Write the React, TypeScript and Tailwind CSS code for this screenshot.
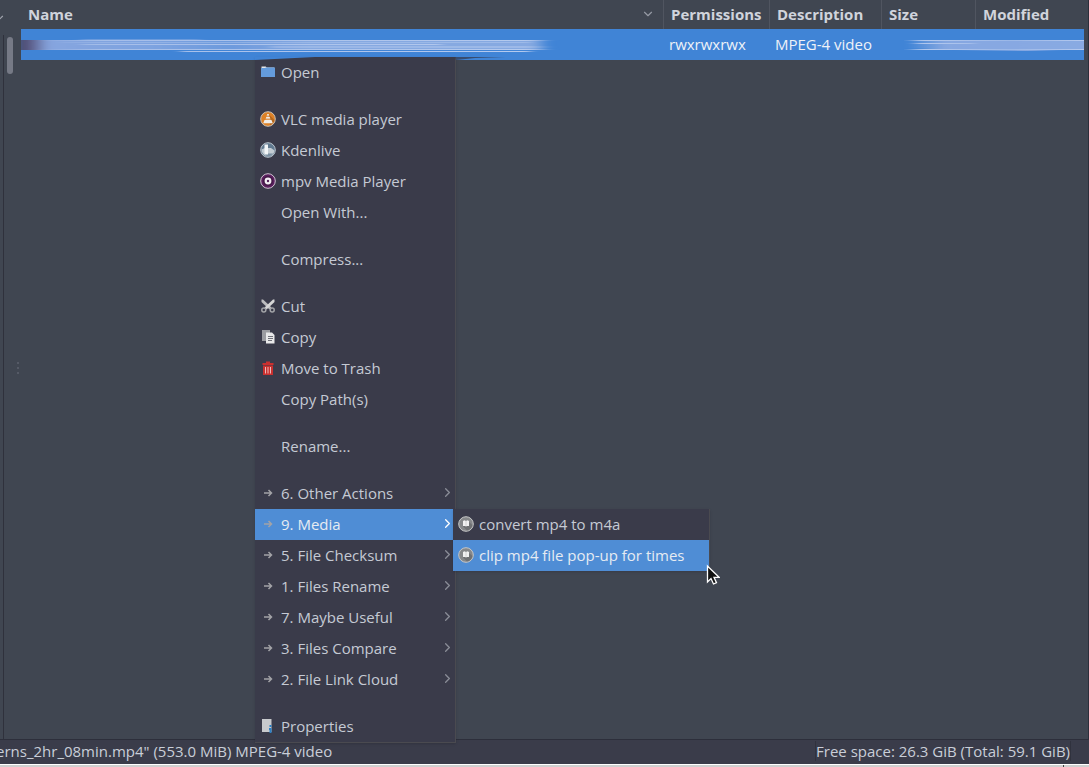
import React from 'react';
import { ChevronDown, ChevronRight } from 'lucide-react';

type Item = {
  label: string;
  icon?: React.ReactNode;
  submenu?: boolean;
  active?: boolean;
};

function FolderIcon() {
  return (
    <svg width="16" height="16" viewBox="0 0 16 16">
      <path d="M1.5 3.5V2.6h4.2l1 .9h7.5v2H1.5z" fill="#e4e6ea" />
      <path d="M1 4h4l1-.6h9V13H1z" fill="#649bdc" />
    </svg>
  );
}

function VlcIcon() {
  return (
    <svg width="16" height="16" viewBox="0 0 16 16">
      <circle cx="8" cy="8" r="7.3" fill="#dd8126" stroke="#c9c0b6" />
      <path d="M8.5 3l6 6a7 7 0 0 1-4.5 5z" fill="#b5671c" />
      <path d="M7.3 3h1.4l.6 1.8H6.7zM6.3 6h3.4l.6 1.8H5.7zM4.5 9h7l1.3 3.2H3.2z" fill="#f0ece7" />
      <path d="M6.7 4.8h2.6l.4 1.2H6.3zM5.7 7.8h4.6l.4 1.2H5.3z" fill="#de9a5b" />
    </svg>
  );
}

function KdenliveIcon() {
  return (
    <svg width="16" height="16" viewBox="0 0 16 16">
      <circle cx="8" cy="8" r="7.3" fill="#60798f" stroke="#b9c3cc" />
      <path d="M1.5 7.5L5 6h6l3.5 2.5A7 7 0 0 1 8 14.5 7 7 0 0 1 1.5 7.5z" fill="#c3ccd3" />
      <path d="M4 11.5h9A7 7 0 0 1 8 14.5a7 7 0 0 1-4-3z" fill="#7b90a2" />
      <path d="M4.5 2.5H8v10H4.5z" fill="#f3f6f8" />
    </svg>
  );
}

function MpvIcon() {
  return (
    <svg width="16" height="16" viewBox="0 0 16 16">
      <circle cx="8" cy="8" r="7.3" fill="#5a1f5e" stroke="#d0c4d2" />
      <circle cx="8" cy="8" r="5" fill="#431846" />
      <circle cx="8" cy="8" r="3.4" fill="#f3eef4" />
      <circle cx="8" cy="8" r="1.2" fill="#52205a" />
    </svg>
  );
}

function CutIcon() {
  return (
    <svg width="16" height="16" viewBox="0 0 16 16">
      <path d="M1.5 1.5V4l8 7.5 2-2L3 1.5z" fill="#bdbdbf" />
      <path d="M14.5 1.5V4l-8 7.5-2-2 8.5-8z" fill="#d6d6d6" />
      <circle cx="3.8" cy="12" r="2" fill="none" stroke="#a3a4a8" strokeWidth="1.5" />
      <circle cx="12.2" cy="12" r="2" fill="none" stroke="#a3a4a8" strokeWidth="1.5" />
    </svg>
  );
}

function CopyIcon() {
  return (
    <svg width="16" height="16" viewBox="0 0 16 16">
      <path d="M2 1h8v11H2z" fill="#9b9ca1" />
      <path d="M6 3.5h6L14.5 6v8.5H6z" fill="#e9e9ea" />
      <path d="M8 7.5h5M8 9.5h5M8 11.5h4" stroke="#6f7078" />
    </svg>
  );
}

function TrashIcon() {
  return (
    <svg width="16" height="16" viewBox="0 0 16 16">
      <path d="M6 1.5h4V3h3.5v2h-11V3H6z" fill="#c9302f" />
      <path d="M3 5.5h10V15H3z" fill="#c9302f" />
      <path d="M5.5 7v6.5M8 7v6.5M10.5 7v6.5" stroke="#efb9b8" />
    </svg>
  );
}

function PropertiesIcon() {
  return (
    <svg width="16" height="16" viewBox="0 0 16 16">
      <path d="M2 1h9.5v13H2z" fill="#c8cacd" />
      <path d="M9.5 7h2v2h-2zM9 10h2.5v5h-2v-3H9z" fill="#2c80c5" />
    </svg>
  );
}

function ArrowIcon() {
  return (
    <svg width="16" height="16" viewBox="0 0 16 16" fill="none" stroke="#a3a3a7" strokeWidth="1.5">
      <path d="M4 8h7.5M8.5 5l3 3-3 3" />
    </svg>
  );
}

function ScriptIcon() {
  return (
    <svg width="16" height="16" viewBox="0 0 16 16">
      <circle cx="8" cy="8" r="7.3" fill="#86888a" stroke="#c6c7c8" />
      <path d="M11 6l3.5 3A7 7 0 0 1 9 14.5l-4-4z" fill="#6f7173" />
      <path d="M5 5l1.5-.7L8 5l1.5-.7L11 5v5H9l-1 .6-1-.6H5z" fill="#f1f1f1" />
      <path d="M8 5v4.5" stroke="#b5b6b7" strokeWidth="0.5" />
    </svg>
  );
}

const groups: Item[][] = [
  [{ label: 'Open', icon: <FolderIcon /> }],
  [
    { label: 'VLC media player', icon: <VlcIcon /> },
    { label: 'Kdenlive', icon: <KdenliveIcon /> },
    { label: 'mpv Media Player', icon: <MpvIcon /> },
    { label: 'Open With...' },
  ],
  [{ label: 'Compress...' }],
  [
    { label: 'Cut', icon: <CutIcon /> },
    { label: 'Copy', icon: <CopyIcon /> },
    { label: 'Move to Trash', icon: <TrashIcon /> },
    { label: 'Copy Path(s)' },
  ],
  [{ label: 'Rename...' }],
  [
    { label: '6. Other Actions', icon: <ArrowIcon />, submenu: true },
    { label: '9. Media', icon: <ArrowIcon />, submenu: true, active: true },
    { label: '5. File Checksum', icon: <ArrowIcon />, submenu: true },
    { label: '1. Files Rename', icon: <ArrowIcon />, submenu: true },
    { label: '7. Maybe Useful', icon: <ArrowIcon />, submenu: true },
    { label: '3. Files Compare', icon: <ArrowIcon />, submenu: true },
    { label: '2. File Link Cloud', icon: <ArrowIcon />, submenu: true },
  ],
  [{ label: 'Properties', icon: <PropertiesIcon /> }],
];

const mediaActions: Item[] = [
  { label: 'convert mp4 to m4a', icon: <ScriptIcon /> },
  { label: 'clip mp4 file pop-up for times', icon: <ScriptIcon />, active: true },
];

const columns = ['Permissions', 'Description', 'Size', 'Modified'];

function MenuItem({ item }: { item: Item }) {
  return (
    <button
      type="button"
      role="menuitem"
      aria-haspopup={item.submenu ? 'menu' : undefined}
      className={`flex h-[31px] w-full items-center gap-[5px] pb-0.5 pl-[5px] text-left whitespace-nowrap ${
        item.active ? 'bg-[#4f8dd5] text-[#e6ebf2]' : 'text-[#c5cad4]'
      }`}
    >
      <span className="h-4 w-4 shrink-0">{item.icon}</span>
      <span className="flex-1">{item.label}</span>
      {item.submenu && (
        <ChevronRight size={15} strokeWidth={2} className={item.active ? 'text-white' : 'text-[#8b8e98]'} />
      )}
    </button>
  );
}

// Brush strokes that hide the file name
function NameSmudge() {
  return (
    <svg className="block h-[31px] w-[540px]" viewBox="0 0 540 31" preserveAspectRatio="none">
      <defs>
        <linearGradient id="name-fade">
          <stop offset="0" stopColor="#43415f" />
          <stop offset="0.025" stopColor="#5b5c88" />
          <stop offset="0.06" stopColor="#86a5df" />
          <stop offset="0.25" stopColor="#7da3e0" />
          <stop offset="0.4" stopColor="#6d9add" />
          <stop offset="0.55" stopColor="#86a9e1" />
          <stop offset="0.97" stopColor="#86a9e1" />
          <stop offset="1" stopColor="#86a9e1" stopOpacity="0" />
        </linearGradient>
        <linearGradient id="name-line" gradientUnits="userSpaceOnUse" x1="0" y1="0" x2="532" y2="0">
          <stop offset="0.03" stopColor="#a5bee9" stopOpacity="0" />
          <stop offset="0.15" stopColor="#a5bee9" />
          <stop offset="0.95" stopColor="#b5caee" />
          <stop offset="1" stopColor="#a5bee9" stopOpacity="0" />
        </linearGradient>
        <filter id="soft" x="-5%" y="-20%" width="110%" height="140%">
          <feGaussianBlur stdDeviation="4 0.5" />
        </filter>
      </defs>
      <g filter="url(#soft)">
        <path d="M-4 11h532v10H-4z" fill="url(#name-fade)" />
        <path d="M60 10h120v1H60z" fill="#86a9e1" opacity="0.6" />
        <path d="M20 11h510v1H20zM10 20h520v1H10zM60 15h360v1H60zM160 22h350v1H160z" fill="url(#name-line)" />
        <path d="M40 13h470v1H40zM250 17h280v2H250z" fill="url(#name-line)" opacity="0.5" />
      </g>
    </svg>
  );
}

function DateSmudge() {
  return (
    <svg className="block h-[31px] w-[180px]" viewBox="0 0 180 31" preserveAspectRatio="none">
      <defs>
        <linearGradient id="date-fade">
          <stop offset="0" stopColor="#86a7e1" stopOpacity="0" />
          <stop offset="0.2" stopColor="#86a7e1" />
          <stop offset="1" stopColor="#89aae2" />
        </linearGradient>
        <linearGradient id="date-line" gradientUnits="userSpaceOnUse" x1="0" y1="0" x2="180" y2="0">
          <stop offset="0" stopColor="#b4c9ee" stopOpacity="0" />
          <stop offset="0.1" stopColor="#b4c9ee" />
          <stop offset="0.6" stopColor="#9bb7e7" />
          <stop offset="1" stopColor="#b4c9ee" />
        </linearGradient>
      </defs>
      <g filter="url(#soft)">
        <path d="M4 12l60-1h125v9l-65 2-70-1-50-2z" fill="url(#date-fade)" />
        <path d="M4 11h185v1H4zM10 14h60v1H10zM4 20h185v1H4z" fill="url(#date-line)" />
      </g>
    </svg>
  );
}

export default function App() {
  return (
    <div className="relative flex h-screen flex-col overflow-hidden bg-[#404651] font-['Open_Sans','Noto_Sans',sans-serif] text-[15px] leading-5 text-[#c9ced8]">
      <main className="flex flex-1 border-r border-[#2d2f3b]">
        {/* Side pane edge with its scrollbar */}
        <aside className="flex w-[21px] shrink-0 flex-col overflow-hidden">
          <div className="flex h-[35px] items-center">
            <ChevronDown size={14} className="-ml-2 shrink-0 text-[#a0a4ad]" />
          </div>
          <div className="ml-[3px] flex flex-1 border-l border-[#2f313c] pt-0.5 pl-[3px]">
            <div className="h-[37px] w-1.5 rounded-full bg-[#767a86]" />
            <div className="flex flex-col gap-[3px] self-center pb-10 pl-1">
              <span className="h-0.5 w-0.5 bg-[#555a66]" />
              <span className="h-0.5 w-0.5 bg-[#555a66]" />
              <span className="h-0.5 w-0.5 bg-[#555a66]" />
            </div>
          </div>
        </aside>

        <div className="min-w-0 flex-1 pr-1">
          <table className="w-full table-fixed border-collapse text-left">
            <colgroup>
              <col />
              <col className="w-[106px]" />
              <col className="w-[112px]" />
              <col className="w-[94px]" />
              <col className="w-[109px]" />
            </colgroup>
            <thead>
              <tr className="h-[29px] text-[#d0d4dc]">
                <th className="p-0 pl-[7px] font-bold" aria-sort="descending">
                  <div className="flex items-center justify-between pr-2 pb-0.5">
                    Name
                    <ChevronDown size={14} className="text-[#969aa4]" />
                  </div>
                </th>
                {columns.map((name) => (
                  <th key={name} className="p-0 font-bold">
                    <div className="flex h-[29px] items-center border-l border-[#505560] pb-0.5 pl-[7px]">{name}</div>
                  </th>
                ))}
              </tr>
            </thead>
            <tbody>
              <tr className="h-[31px] bg-[#4084d6] text-[#eef2f8]">
                <td className="p-0"><NameSmudge /></td>
                <td className="p-0 pb-0.5 pl-[6px]">rwxrwxrwx</td>
                <td className="p-0 pb-0.5 pl-[6px]">MPEG-4 video</td>
                <td className="p-0 pl-[23px]" colSpan={2}><DateSmudge /></td>
              </tr>
            </tbody>
          </table>
        </div>
      </main>

      <footer className="flex h-[25px] shrink-0 items-center justify-between border-t border-[#2d2f3b] bg-[#3a3c4a] pr-[18px] pb-0.5">
        <span className="-ml-1">erns_2hr_08min.mp4" (553.0 MiB) MPEG-4 video</span>
        <span className="border-x border-[#30323e]">Free space: 26.3 GiB (Total: 59.1 GiB)</span>
      </footer>
      <div className="flex h-[3px] shrink-0 border-t border-white bg-[#cfcfcf]">
        <span className="ml-auto w-[26px] border-l border-[#444444]" />
      </div>

      {/* Context menu */}
      <div
        role="menu"
        className="absolute top-[57px] left-[255px] w-[201px] border-r border-b border-[#4a4a50] bg-[#3a3b4a] shadow-sm"
      >
        <svg className="absolute top-0 left-0" width="250" height="4" viewBox="0 0 250 4">
          <path d="M0 0h60L30 1.5 0 3z" fill="#4084d6" />
          <path d="M200 0h50l-30 1-19 2z" fill="#343f56" opacity="0.8" />
        </svg>
        {groups.map((group, i) => (
          <div key={i} className={i > 0 ? 'pt-4' : ''}>
            {group.map((item) => (
              <MenuItem key={item.label} item={item} />
            ))}
          </div>
        ))}
      </div>

      <div
        role="menu"
        aria-label="9. Media"
        className="absolute top-[509px] left-[453px] w-[257px] border-r border-[#4a4a50] bg-[#3a3b4a] shadow-sm"
      >
        {mediaActions.map((item) => (
          <MenuItem key={item.label} item={item} />
        ))}
      </div>

      {/* Mouse pointer */}
      <svg className="absolute top-[564px] left-[706px]" width="14" height="22" viewBox="0 0 14 22">
        <path
          d="M1.5 2v16L5 14.5 7.5 20l3-1.3L8 13.3h5z"
          fill="#111111"
          stroke="#ffffff"
          strokeWidth="1.3"
        />
      </svg>
    </div>
  );
}
